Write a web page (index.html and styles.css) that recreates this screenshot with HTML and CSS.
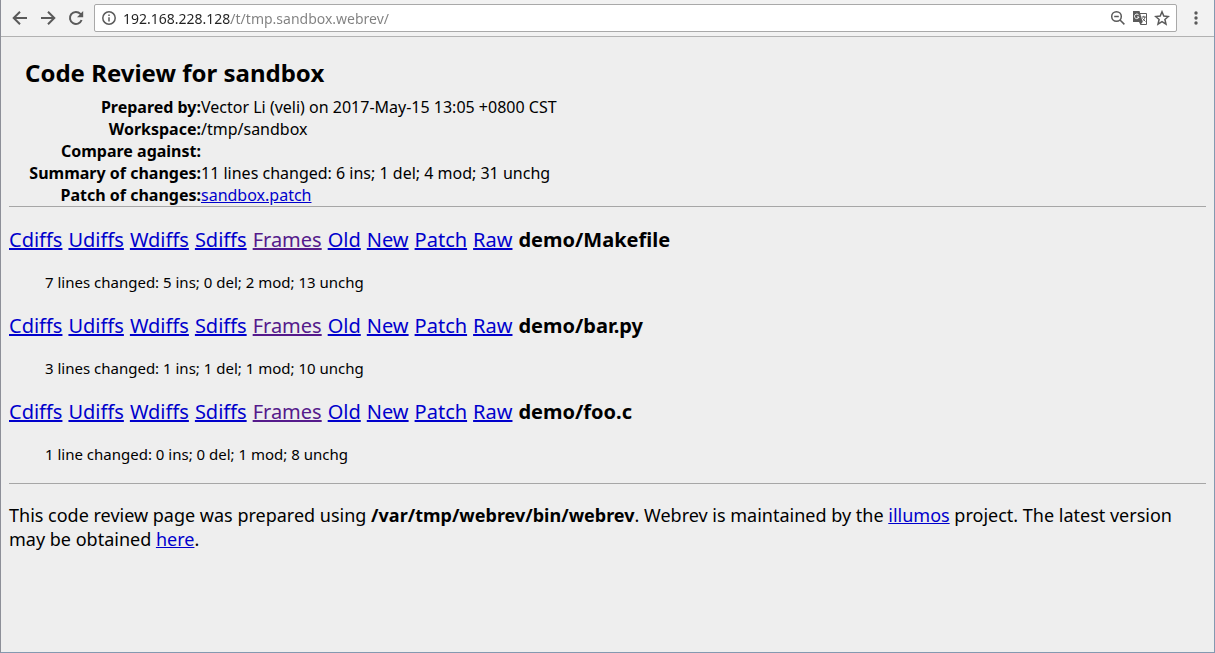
FILE: index.html
```html
<!DOCTYPE html>
<html lang="en">
<head>
    <meta charset="UTF-8">
    <meta name="viewport" content="width=device-width, initial-scale=1.0">
    <title>Code Review for sandbox</title>
    <link rel="stylesheet" href="styles.css">
</head>
<body>
    <header class="toolbar">
        <button type="button" aria-label="Back">
            <svg width="16" height="16" viewBox="0 0 16 16"><path d="M15 8H2M8 1.7L1.7 8L8 14.3"/></svg>
        </button>
        <button type="button" aria-label="Forward">
            <svg width="16" height="16" viewBox="0 0 16 16"><path d="M1 8h13M8 1.7L14.3 8L8 14.3"/></svg>
        </button>
        <button type="button" aria-label="Reload">
            <svg width="16" height="16" viewBox="0 0 16 16"><path d="M13.6 10A6 6 0 1 1 12.4 3.9L14 5.5"/><path class="solid" d="M15.2 1v6.2H9z"/></svg>
        </button>
        <div class="address">
            <svg width="14" height="14" viewBox="0 0 14 14"><circle class="thin" cx="7" cy="7" r="6.2"/><path class="thin" d="M7 6.2v4.2M7 3.4v1.6"/></svg>
            <input type="text" aria-label="Address" value="192.168.228.128/t/tmp.sandbox.webrev/">
            <button type="button" aria-label="Zoom">
                <svg width="16" height="16" viewBox="0 0 16 16"><circle class="thin" cx="6.5" cy="6.5" r="4.8"/><path class="thin" d="M4.2 6.5h4.6M10 10l4.4 4.4"/></svg>
            </button>
            <button type="button" aria-label="Translate this page">
                <svg width="16" height="16" viewBox="0 0 16 16"><path class="hair" d="M8 3.5h6.5v11H8.5"/><path class="solid" d="M1 1h6.5l3.2 11H1z"/><path class="light" d="M6.8 5.2A2.3 2.3 0 1 0 7 7H5"/><path class="solid" d="M7 12h3.6L8.5 15z"/><path class="hair" d="M9.8 7h4M11.8 5.8V7M13 7c-.4 2-1.4 3.2-2.4 4M10.5 8.5l3 3"/></svg>
            </button>
            <button type="button" aria-label="Bookmark this page">
                <svg width="16" height="16" viewBox="0 0 16 16"><path class="thin" d="M8 1.8l1.8 4.3 4.6.4-3.5 3 1.1 4.6L8 11.7l-4 2.4 1.1-4.6-3.5-3 4.6-.4z"/></svg>
            </button>
        </div>
        <button type="button" aria-label="Menu">
            <svg width="16" height="16" viewBox="0 0 16 16"><circle class="solid" cx="8" cy="3" r="1.7"/><circle class="solid" cx="8" cy="8" r="1.7"/><circle class="solid" cx="8" cy="13" r="1.7"/></svg>
        </button>
    </header>

    <main>
        <h1>Code Review for sandbox</h1>
        <table class="summary">
            <tr><th scope="row">Prepared by:</th><td>Vector Li (veli) on 2017-May-15 13:05 +0800 CST</td></tr>
            <tr><th scope="row">Workspace:</th><td>/tmp/sandbox</td></tr>
            <tr><th scope="row">Compare against:</th><td></td></tr>
            <tr><th scope="row">Summary of changes:</th><td>11 lines changed: 6 ins; 1 del; 4 mod; 31 unchg</td></tr>
            <tr><th scope="row">Patch of changes:</th><td><a href="#">sandbox.patch</a></td></tr>
        </table>
        <hr>

        <p class="file">
            <a href="#">Cdiffs</a>
            <a href="#">Udiffs</a>
            <a href="#">Wdiffs</a>
            <a href="#">Sdiffs</a>
            <a href="#" class="visited">Frames</a>
            <a href="#">Old</a>
            <a href="#">New</a>
            <a href="#">Patch</a>
            <a href="#">Raw</a>
            <b>demo/Makefile</b>
        </p>
        <p class="changes">7 lines changed: 5 ins; 0 del; 2 mod; 13 unchg</p>

        <p class="file">
            <a href="#">Cdiffs</a>
            <a href="#">Udiffs</a>
            <a href="#">Wdiffs</a>
            <a href="#">Sdiffs</a>
            <a href="#" class="visited">Frames</a>
            <a href="#">Old</a>
            <a href="#">New</a>
            <a href="#">Patch</a>
            <a href="#">Raw</a>
            <b>demo/bar.py</b>
        </p>
        <p class="changes">3 lines changed: 1 ins; 1 del; 1 mod; 10 unchg</p>

        <p class="file">
            <a href="#">Cdiffs</a>
            <a href="#">Udiffs</a>
            <a href="#">Wdiffs</a>
            <a href="#">Sdiffs</a>
            <a href="#" class="visited">Frames</a>
            <a href="#">Old</a>
            <a href="#">New</a>
            <a href="#">Patch</a>
            <a href="#">Raw</a>
            <b>demo/foo.c</b>
        </p>
        <p class="changes">1 line changed: 0 ins; 0 del; 1 mod; 8 unchg</p>
        <hr>

        <p class="credits">This code review page was prepared using <b>/var/tmp/webrev/bin/webrev</b>. Webrev is maintained by the <a href="#">illumos</a> project. The latest version may be obtained <a href="#">here</a>.</p>
    </main>
</body>
</html>
```
FILE: styles.css
```css
* {
    box-sizing: border-box;
}
body {
    margin: 0;
    min-height: 100vh;
    background-color: #eeeeee;
    border: 1px solid #8499b0;
    border-top: none;
    border-left-color: #8d8f98;
    color: black;
    font-family: "Noto Sans", "Open Sans", sans-serif;
    font-size: 16px;
}

/* Browser toolbar */
.toolbar {
    display: flex;
    align-items: center;
    gap: 12px;
    height: 37px;
    padding: 0 10px 0 11px;
    background-color: #f2f2f2;
    border-bottom: 1px solid #b2b2b2;
}
.toolbar button {
    display: flex;
    padding: 0;
    border: none;
    background: none;
}
.toolbar svg {
    flex: none;
    fill: none;
    stroke: #5a5a5a;
    stroke-width: 2;
}
.toolbar .thin {
    stroke-width: 1.5;
}
.toolbar .hair {
    stroke-width: 1;
}
.toolbar .light {
    stroke: white;
    stroke-width: 1;
}
.toolbar .solid {
    fill: #5a5a5a;
    stroke: none;
}
.address {
    display: flex;
    flex: 1;
    align-items: center;
    gap: 6px;
    height: 28px;
    margin: 0 -1px 0 -2px;
    padding: 0 6px 0 7px;
    background-color: white;
    border: 1px solid #a9a9a9;
    border-radius: 2px;
}
/* host is dark, the path after it is grey */
.address input {
    flex: 1;
    min-width: 0;
    padding: 0 0 0 1px;
    border: none;
    outline: none;
    background: linear-gradient(to right, #222222 109px, #808080 109px);
    -webkit-background-clip: text;
    background-clip: text;
    color: transparent;
    font-family: inherit;
    font-size: 14px;
}

/* Review page */
main {
    padding: 0 8px;
}
h1 {
    margin: 18px 0 5px 16px;
    font-size: 24px;
    line-height: 36px;
}
.summary {
    margin-left: 16px;
    border-collapse: collapse;
    line-height: 22px;
}
.summary th,
.summary td {
    height: 22px;
    padding: 0;
}
.summary th {
    width: 176px;
    text-align: right;
    white-space: nowrap;
}
hr {
    height: 1px;
    margin: 0;
    border: none;
    background-color: #a6a6a6;
}
a {
    color: #0000cc;
}
a.visited {
    color: #551a8b;
}
p {
    margin: 0;
}
.file {
    display: flex;
    flex-wrap: wrap;
    gap: 0 6px;
    margin-top: 17px;
    font-size: 20px;
    line-height: 32px;
}
.changes {
    margin: 16px 36px 0;
    font-size: 15px;
    line-height: 21px;
}
.changes + hr {
    margin-top: 18px;
}
.credits {
    margin-top: 19px;
    font-size: 18px;
    line-height: 24px;
}
```
